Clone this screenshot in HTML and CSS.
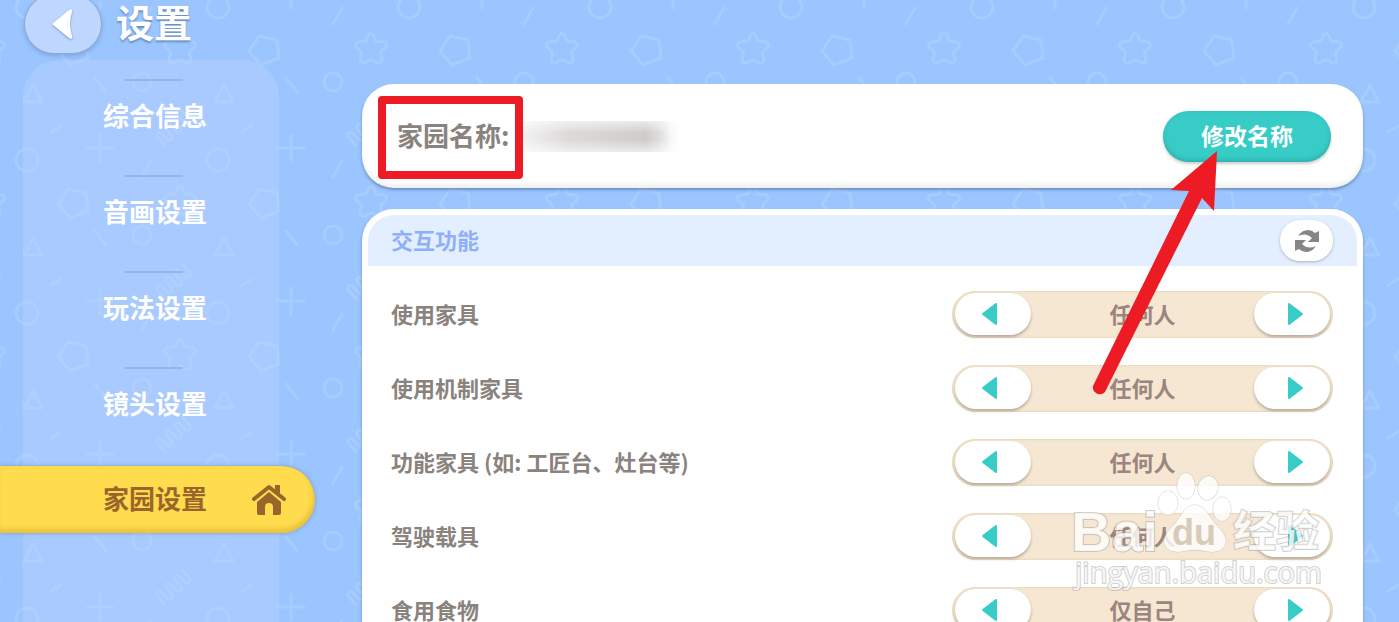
FILE: index.html
```
<!DOCTYPE html>
<html lang="zh-CN">

<head>
  <meta charset="UTF-8">
  <meta name="viewport" content="width=device-width, initial-scale=1.0">
  <title>设置</title>
  <link rel="stylesheet" href="styles.css">
</head>

<body>
  <!-- Repeating background pattern -->
  <svg class="pattern" aria-hidden="true">
    <defs>
      <pattern id="shapes" width="191" height="153" patternUnits="userSpaceOnUse">
        <g fill="none" stroke="#fff" stroke-width="3" stroke-linecap="round" stroke-linejoin="round">
          <path id="star" d="M180 33.500Q183 33.500 184.500 40Q185 41.500 187 41.500Q194.500 41 195.500 44.500Q196 47 190.500 51Q189 52.500 190 55Q192 61 189.500 62.500Q187 64 182 60.500Q180 59.500 178 60.500Q173 64 170.500 62.500Q168 61 170 55Q171 52.500 169.500 51Q164 47 164.500 44.500Q165.500 41 173 41.500Q175 41.500 175.500 40Q177 33.500 180 33.500Z" />
          <use href="#star" x="-191" />
          <path d="M68 36L86 40L88 58L70 65L58 51Z" />
          <circle cx="142" cy="82" r="9" />
          <path d="M95 78L106 92M51 132L61 126M151 8L142 24" />
          <path d="M33 85L42 102H24Z" />
          <path d="M87 148H113M100 135V161M100 -18V8" />
          <circle cx="27" cy="7" r="11" />
          <circle cx="27" cy="160" r="11" />
          <path id="spring" transform="translate(175 127) rotate(-42)" d="M-20 7V-4a3 3 0 0 1 6 0V4a3 3 0 0 0 6 0V-4a3 3 0 0 1 6 0V4a3 3 0 0 0 6 0V-4a3 3 0 0 1 6 0V4a3 3 0 0 0 6 0V-7" />
          <use href="#spring" x="-191" />
        </g>
      </pattern>
    </defs>
    <rect width="100%" height="100%" fill="url(#shapes)" />
  </svg>

  <header class="topbar">
    <button class="back" aria-label="返回">
      <svg width="22" height="32" viewBox="0 0 22 32" aria-hidden="true">
        <path d="M1 16L18 2Q22 0 21 4Q17 16 21 28Q22 32 18 30Z" fill="#fff" />
      </svg>
    </button>
    <h1>设置</h1>
  </header>

  <div class="layout">
    <nav class="sidebar">
      <a class="tab" href="#">综合信息</a>
      <a class="tab" href="#">音画设置</a>
      <a class="tab" href="#">玩法设置</a>
      <a class="tab" href="#">镜头设置</a>
      <a class="tab active" href="#" aria-current="page">
        <span>家园设置</span>
        <svg width="34" height="32" viewBox="0 0 34 32" aria-hidden="true">
          <path d="M2 15L17 3L32 15" fill="none" stroke="#9a652d" stroke-width="4" stroke-linecap="round" stroke-linejoin="round" />
          <path d="M23 1H28V12L23 8ZM17 8L29 18V29Q29 31 27 31H21V23Q21 19 17 19Q13 19 13 23V31H7Q5 31 5 29V18Z" fill="#9a652d" />
        </svg>
      </a>
    </nav>

    <main>
      <section class="card name-card">
        <span class="name-label">家园名称:</span>
        <span class="name-value"></span>
        <button class="rename">修改名称</button>
        <span class="frame"></span>
      </section>

      <section class="card panel">
        <div class="panel-head">
          <h2>交互功能</h2>
          <button class="refresh" aria-label="刷新">
            <svg width="26" height="24" viewBox="0 0 26 24" aria-hidden="true">
              <path d="M4 7Q8 1 14 1Q18 1 21 4L25 2V13H14L18 9Q12 3 4 7Z" fill="#868686" />
              <path d="M22 17Q18 23 12 23Q8 23 5 20L1 22V11H12L8 15Q14 21 22 17Z" fill="#868686" />
            </svg>
          </button>
        </div>
        <div class="row">
          <span>使用家具</span>
          <div class="stepper" role="group" aria-label="使用家具">
            <button aria-label="上一个"><svg width="16" height="22" viewBox="0 0 16 22"><path d="M14 1V21L1 11Z" /></svg></button>
            <output>任何人</output>
            <button aria-label="下一个"><svg width="16" height="22" viewBox="0 0 16 22"><path d="M2 1V21L15 11Z" /></svg></button>
          </div>
        </div>
        <div class="row">
          <span>使用机制家具</span>
          <div class="stepper" role="group" aria-label="使用机制家具">
            <button aria-label="上一个"><svg width="16" height="22" viewBox="0 0 16 22"><path d="M14 1V21L1 11Z" /></svg></button>
            <output>任何人</output>
            <button aria-label="下一个"><svg width="16" height="22" viewBox="0 0 16 22"><path d="M2 1V21L15 11Z" /></svg></button>
          </div>
        </div>
        <div class="row">
          <span>功能家具 (如: 工匠台、灶台等)</span>
          <div class="stepper" role="group" aria-label="功能家具">
            <button aria-label="上一个"><svg width="16" height="22" viewBox="0 0 16 22"><path d="M14 1V21L1 11Z" /></svg></button>
            <output>任何人</output>
            <button aria-label="下一个"><svg width="16" height="22" viewBox="0 0 16 22"><path d="M2 1V21L15 11Z" /></svg></button>
          </div>
        </div>
        <div class="row">
          <span>驾驶载具</span>
          <div class="stepper" role="group" aria-label="驾驶载具">
            <button aria-label="上一个"><svg width="16" height="22" viewBox="0 0 16 22"><path d="M14 1V21L1 11Z" /></svg></button>
            <output>任何人</output>
            <button aria-label="下一个"><svg width="16" height="22" viewBox="0 0 16 22"><path d="M2 1V21L15 11Z" /></svg></button>
          </div>
        </div>
        <div class="row">
          <span>食用食物</span>
          <div class="stepper" role="group" aria-label="食用食物">
            <button aria-label="上一个"><svg width="16" height="22" viewBox="0 0 16 22"><path d="M14 1V21L1 11Z" /></svg></button>
            <output>仅自己</output>
            <button aria-label="下一个"><svg width="16" height="22" viewBox="0 0 16 22"><path d="M2 1V21L15 11Z" /></svg></button>
          </div>
        </div>
      </section>

      <!-- Arrow pointing at the rename button -->
      <svg class="arrow" width="130" height="250" viewBox="1090 149 130 250" aria-hidden="true">
        <path d="M1217 151L1214 211L1202 198L1105 392A7 7 0 0 1 1093 386L1189 191L1171 190Z" fill="#ed1c24" />
      </svg>

      <!-- Watermark -->
      <svg class="watermark" width="260" height="122" viewBox="1068 470 260 122">
        <g fill="#fff" fill-opacity=".8" stroke="#999" stroke-opacity=".45" paint-order="stroke">
          <ellipse cx="1168" cy="503" rx="10" ry="12" />
          <ellipse cx="1186" cy="486" rx="9" ry="13" />
          <ellipse cx="1208" cy="488" rx="10" ry="12" transform="rotate(12 1208 488)" />
          <ellipse cx="1222" cy="509" rx="9" ry="12" />
          <path d="M1195 505Q1203 505 1209 515Q1214 523 1221 530Q1229 540 1224 547Q1219 554 1205 551Q1195 549 1185 551Q1171 554 1166 547Q1161 540 1169 530Q1176 523 1181 515Q1187 505 1195 505Z" />
          <g stroke-width="2">
            <text class="wm-logo" x="1071" y="551">Bai</text>
            <text class="wm-cjk" x="1233" y="547">经验</text>
            <text class="wm-url" x="1075" y="583">jingyan.baidu.com</text>
          </g>
        </g>
        <text class="wm-du" x="1172" y="545">du</text>
      </svg>
    </main>
  </div>
</body>

</html>
```
FILE: styles.css
```
* {
  box-sizing: border-box;
}

body {
  position: relative;
  margin: 0;
  height: 100vh;
  overflow: hidden;
  background: #9bc5ff;
  color: #8a827d;
  font-family: "Noto Sans CJK SC", sans-serif;
  font-weight: bold;
}

button {
  padding: 0;
  border: none;
  font: inherit;
  cursor: pointer;
}

svg {
  display: block;
}

.pattern {
  position: absolute;
  inset: 0;
  width: 100%;
  height: 100%;
  opacity: 0.12;
}

.topbar {
  position: relative;
  display: flex;
  align-items: center;
  gap: 14px;
  height: 60px;
  padding-left: 24px;
}

.back {
  display: flex;
  align-items: center;
  justify-content: center;
  width: 78px;
  height: 60px;
  margin-top: -12px;
  padding-right: 2px;
  border: 1px solid #8ba8d8;
  border-radius: 30px;
  background: #bfd6ff;
  box-shadow: 0 2px 4px rgba(70, 110, 170, 0.35);
}

.back svg {
  filter: drop-shadow(0 1px 1px #7f96bb);
}

h1 {
  margin: 0 0 18px;
  color: white;
  font-size: 38px;
  line-height: 42px;
  text-shadow: 0 2px 2px #6a8dc0;
}

.layout {
  position: relative;
  display: grid;
  grid-template-columns: 256px 1fr;
  gap: 83px;
  padding: 0 36px 0 23px;
}

.sidebar {
  height: calc(100vh - 60px);
  padding-top: 19px;
  border-radius: 36px 36px 0 0;
  background: rgba(192, 212, 255, 0.35);
}

.tab {
  display: block;
  height: 96px;
  padding: 18px 0 0 80px;
  background: linear-gradient(#94b5e9, #94b5e9) 102px 0 / 58px 2px no-repeat;
  color: white;
  font-size: 26px;
  line-height: 36px;
  text-decoration: none;
}

.active {
  display: flex;
  align-items: center;
  gap: 45px;
  height: 67px;
  margin: 3px -36px 0 -23px;
  padding: 0 0 0 103px;
  border-radius: 0 34px 34px 0;
  background: #ffdb4e;
  color: #9a652d;
  box-shadow: 0 0 4px rgba(100, 110, 120, 0.5), inset -2px -4px 4px rgba(180, 140, 20, 0.3);
}

.active span,
.name-label,
.rename,
h2,
.row span {
  padding-bottom: 3px;
}

main {
  position: relative;
  padding-top: 24px;
}

.card {
  border-radius: 32px;
  background: white;
  box-shadow: 0 2px 3px rgba(60, 90, 140, 0.5);
}

.name-card {
  position: relative;
  display: flex;
  align-items: center;
  height: 104px;
  padding: 0 32px 0 35px;
  box-shadow: 0 2px 3px rgba(60, 90, 140, 0.5), inset 0 -4px 4px rgba(0, 0, 0, 0.06);
}

.name-label {
  font-size: 26px;
}

/* blurred-out name */
.name-value {
  width: 160px;
  height: 31px;
  margin-left: 12px;
  background:
    linear-gradient(rgba(255, 255, 255, 0.6), transparent 40%, transparent 60%, rgba(255, 255, 255, 0.6)),
    linear-gradient(90deg, #f3f2f2, #dcdad9 30%, #cfccca 78%, #dedcdb 86%, #f8f8f8 94%, white);
}

.rename {
  width: 168px;
  height: 51px;
  margin-left: auto;
  border-radius: 26px;
  background: #38ccc7;
  color: white;
  font-size: 23px;
  box-shadow: 0 2px 3px rgba(0, 0, 0, 0.2), inset 0 -2px 4px rgba(0, 90, 90, 0.25);
}

.frame {
  position: absolute;
  left: 16px;
  top: 12px;
  width: 145px;
  height: 83px;
  border: 8px solid #ed1c24;
  border-radius: 4px;
}

.panel {
  margin-top: 21px;
  padding: 6px 6px 0;
  border-radius: 32px 32px 0 0;
}

.panel-head {
  display: flex;
  align-items: center;
  justify-content: space-between;
  height: 51px;
  margin-bottom: 11px;
  padding: 0 24px 0 23px;
  border-radius: 26px 26px 0 0;
  background: #e3efff;
}

h2 {
  margin: 0;
  color: #8fb0f8;
  font-size: 22px;
}

.refresh {
  display: flex;
  align-items: center;
  justify-content: center;
  width: 53px;
  height: 41px;
  border-radius: 20px;
  background: white;
  box-shadow: 0 1px 3px rgba(0, 0, 0, 0.25);
}

.row {
  display: flex;
  align-items: center;
  justify-content: space-between;
  height: 74px;
  padding: 0 24px 0 23px;
  font-size: 22px;
}

.stepper {
  display: flex;
  align-items: center;
  width: 381px;
  height: 47px;
  padding: 0 3px 1px;
  border-radius: 24px;
  background: #f5e7d1;
  box-shadow: inset 0 0 3px #dcc8ae;
}

.stepper button {
  display: flex;
  align-items: center;
  justify-content: center;
  width: 76px;
  height: 42px;
  padding-right: 6px;
  border-radius: 21px;
  background: white;
  box-shadow: 0 2px 3px rgba(90, 80, 70, 0.4);
}

.stepper button:last-child {
  padding: 0 0 0 6px;
}

.stepper path {
  fill: #38ccc7;
  stroke: #38ccc7;
  stroke-width: 2px;
  stroke-linejoin: round;
}

.stepper output {
  flex: 1;
  padding-bottom: 2px;
  color: #9c8480;
  text-align: center;
}

.arrow {
  position: absolute;
  top: 89px;
  right: 143px;
}

.watermark {
  position: absolute;
  top: 410px;
  right: 35px;
  pointer-events: none;
}

.wm-logo {
  font: bold 56px "Liberation Sans", sans-serif;
}

.wm-cjk {
  font: bold 43px "Noto Sans CJK SC", sans-serif;
}

.wm-url {
  font: 29px "Open Sans", sans-serif;
}

.wm-du {
  fill: #d8cbb7;
  font: bold 36px "Liberation Sans", sans-serif;
}
```
